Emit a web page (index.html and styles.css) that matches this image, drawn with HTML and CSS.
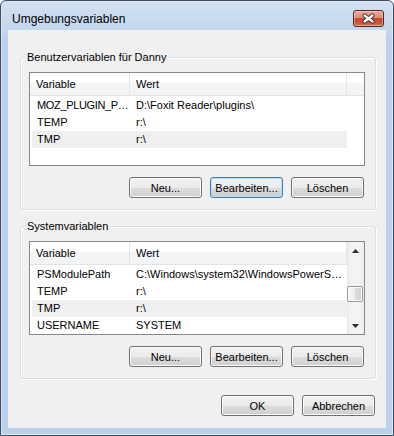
FILE: index.html
```html
<!DOCTYPE html>
<html lang="de">
  <head>
    <meta charset="UTF-8" />
    <meta name="viewport" content="width=device-width, initial-scale=1.0" />
    <title>Umgebungsvariablen</title>
    <link rel="stylesheet" href="styles.css">
  </head>
  <body>
    <div class="window">
      <div class="titlebar">
        <span class="title">Umgebungsvariablen</span>
        <button class="close" type="button" aria-label="Schließen">
          <svg width="15" height="11" viewBox="0 0 15 11">
            <path d="M3.5 2.5 L11.5 8.5 M11.5 2.5 L3.5 8.5" stroke="#4b3431" stroke-width="4.2" stroke-linecap="round" fill="none" />
            <path d="M3.5 2.5 L11.5 8.5 M11.5 2.5 L3.5 8.5" stroke="#ffffff" stroke-width="2.2" stroke-linecap="round" fill="none" />
          </svg>
        </button>
      </div>

      <div class="client">
        <fieldset class="group">
          <legend>Benutzervariablen für Danny</legend>
          <div class="list">
            <div class="list-main">
              <div class="list-head">
                <div class="head-cell">Variable</div>
                <div class="head-cell">Wert</div>
                <div class="head-cell filler"></div>
              </div>
              <div class="list-body">
                <div class="row">
                  <div class="cell squeeze">MOZ_PLUGIN_P…</div>
                  <div class="cell">D:\Foxit Reader\plugins\</div>
                </div>
                <div class="row">
                  <div class="cell">TEMP</div>
                  <div class="cell">r:\</div>
                </div>
                <div class="row selected">
                  <div class="cell">TMP</div>
                  <div class="cell">r:\</div>
                </div>
              </div>
            </div>
          </div>
          <div class="buttons">
            <button type="button" class="btn">Neu...</button>
            <button type="button" class="btn default">Bearbeiten...</button>
            <button type="button" class="btn">Löschen</button>
          </div>
        </fieldset>

        <fieldset class="group second">
          <legend>Systemvariablen</legend>
          <div class="list">
            <div class="list-main">
              <div class="list-head narrow">
                <div class="head-cell">Variable</div>
                <div class="head-cell">Wert</div>
              </div>
              <div class="list-body">
                <div class="row">
                  <div class="cell">PSModulePath</div>
                  <div class="cell">C:\Windows\system32\WindowsPowerS…</div>
                </div>
                <div class="row">
                  <div class="cell">TEMP</div>
                  <div class="cell">r:\</div>
                </div>
                <div class="row selected">
                  <div class="cell">TMP</div>
                  <div class="cell">r:\</div>
                </div>
                <div class="row">
                  <div class="cell">USERNAME</div>
                  <div class="cell">SYSTEM</div>
                </div>
              </div>
            </div>
            <div class="scrollbar">
              <div class="sb-arrow">
                <svg width="7" height="4" viewBox="0 0 7 4"><polygon points="3.5,0 7,4 0,4" fill="#2b2b2b" /></svg>
              </div>
              <div class="sb-track">
                <div class="sb-thumb"></div>
              </div>
              <div class="sb-arrow">
                <svg width="7" height="4" viewBox="0 0 7 4"><polygon points="0,0 7,0 3.5,4" fill="#2b2b2b" /></svg>
              </div>
            </div>
          </div>
          <div class="buttons">
            <button type="button" class="btn">Neu...</button>
            <button type="button" class="btn">Bearbeiten...</button>
            <button type="button" class="btn">Löschen</button>
          </div>
        </fieldset>

        <div class="footer">
          <button type="button" class="btn">OK</button>
          <button type="button" class="btn">Abbrechen</button>
        </div>
      </div>
    </div>
  </body>
</html>
```

FILE: styles.css
```css
html,
body {
  margin: 0;
  background-color: #ffffff;
}

body {
  font-family: "Liberation Sans", Arial, sans-serif;
  font-size: 11px;
  color: #000000;
}

.window {
  width: 394px;
  height: 436px;
  box-sizing: border-box;
  border: 1px solid #3e4f62;
  border-radius: 6px 6px 0 0;
  padding: 0 7px 7px;
  display: flex;
  flex-direction: column;
  background: linear-gradient(#d3e1f1 0, #c3d7ed 29px, #b9d1ea 40px, #b9d1ea 100%);
  box-shadow: inset 0 0 0 1px #dde8f4;
}

.titlebar {
  height: 29px;
  display: flex;
  align-items: flex-start;
}

.title {
  margin: 10px 0 0 4px;
  font-size: 12px;
  line-height: 16px;
}

.close {
  margin: 9px 2px 0 auto;
  width: 31px;
  height: 17px;
  padding: 0;
  border: 1px solid #56241c;
  border-radius: 3px;
  display: flex;
  align-items: center;
  justify-content: center;
  background: linear-gradient(#e9ab9d 0%, #df8b79 45%, #c94a30 50%, #c8523a 80%, #d67a60 100%);
  box-shadow: inset 0 0 0 1px rgba(255, 255, 255, 0.35);
}

.client {
  flex: 1;
  background-color: #f0f0f0;
  padding: 19px 10px 0 12px;
}

.group {
  margin: 0;
  min-width: 0;
  padding: 7px 10px 11px 8px;
  border: 1px solid #d5dfe5;
  border-radius: 3px;
  box-shadow: inset 1px 1px 0 #ffffff, 1px 1px 0 #ffffff;
}

.group.second {
  margin-top: 8px;
}

.group legend {
  margin-left: -4px;
  padding: 0 2px;
  line-height: 16px;
  background-color: #f0f0f0;
}

.list {
  height: 94px;
  box-sizing: border-box;
  border: 1px solid #828790;
  background-color: #ffffff;
  display: flex;
  overflow: hidden;
}

.list-main {
  flex: 1;
  min-width: 0;
}

.list-head {
  display: grid;
  grid-template-columns: 100px 217px 1fr;
  height: 23px;
  box-sizing: border-box;
  border-bottom: 1px solid #e2e3e5;
  background: linear-gradient(#ffffff 0, #ffffff 42%, #f4f5f7 48%, #f3f4f6 100%);
}

.list-head.narrow {
  grid-template-columns: 100px 217px;
}

.head-cell {
  line-height: 22px;
  padding-left: 6px;
  border-right: 1px solid #e5e5e5;
}

.head-cell.filler {
  border-right: none;
}

.list-body {
  padding-top: 1px;
}

.row {
  display: grid;
  grid-template-columns: 98px 217px;
  width: 315px;
  height: 17px;
  margin-left: 2px;
  line-height: 17px;
}

.row.selected {
  background-color: #efefef;
}

.cell {
  white-space: nowrap;
  overflow: hidden;
  padding-left: 6px;
}

.cell:first-child {
  padding-left: 5px;
}

.cell.squeeze {
  letter-spacing: -0.35px;
}

.scrollbar {
  width: 17px;
  display: flex;
  flex-direction: column;
  background: linear-gradient(to right, #e8e8e8 0, #f2f2f2 3px, #f4f4f4 12px, #ececec 100%);
}

.sb-arrow {
  height: 17px;
  display: flex;
  align-items: center;
  justify-content: center;
}

.sb-track {
  flex: 1;
  padding-top: 27px;
}

.sb-thumb {
  width: 16px;
  height: 16px;
  box-sizing: border-box;
  border: 1px solid #989898;
  border-radius: 2px;
  background: linear-gradient(to right, #f7f7f7 0, #ececec 50%, #dcdcdc 50%, #d2d2d2 100%);
  box-shadow: inset 0 0 0 1px #fbfbfb;
}

.buttons {
  display: flex;
  justify-content: flex-end;
  gap: 8px;
  margin-top: 11px;
  padding-right: 1px;
}

.footer {
  display: flex;
  justify-content: flex-end;
  gap: 8px;
  margin-top: 16px;
  padding-right: 1px;
}

.btn {
  width: 73px;
  height: 21px;
  padding: 0;
  font-family: inherit;
  font-size: 11px;
  color: #000000;
  border: 1px solid #707070;
  border-radius: 3px;
  background: linear-gradient(#f2f2f2 0%, #ebebeb 50%, #dddddd 50%, #cfcfcf 100%);
  box-shadow: inset 0 0 0 1px #fbfbfb;
}

.btn.default {
  border-color: #3c7fb1;
  box-shadow: inset 0 0 0 1px #b6e0f7;
}
```
